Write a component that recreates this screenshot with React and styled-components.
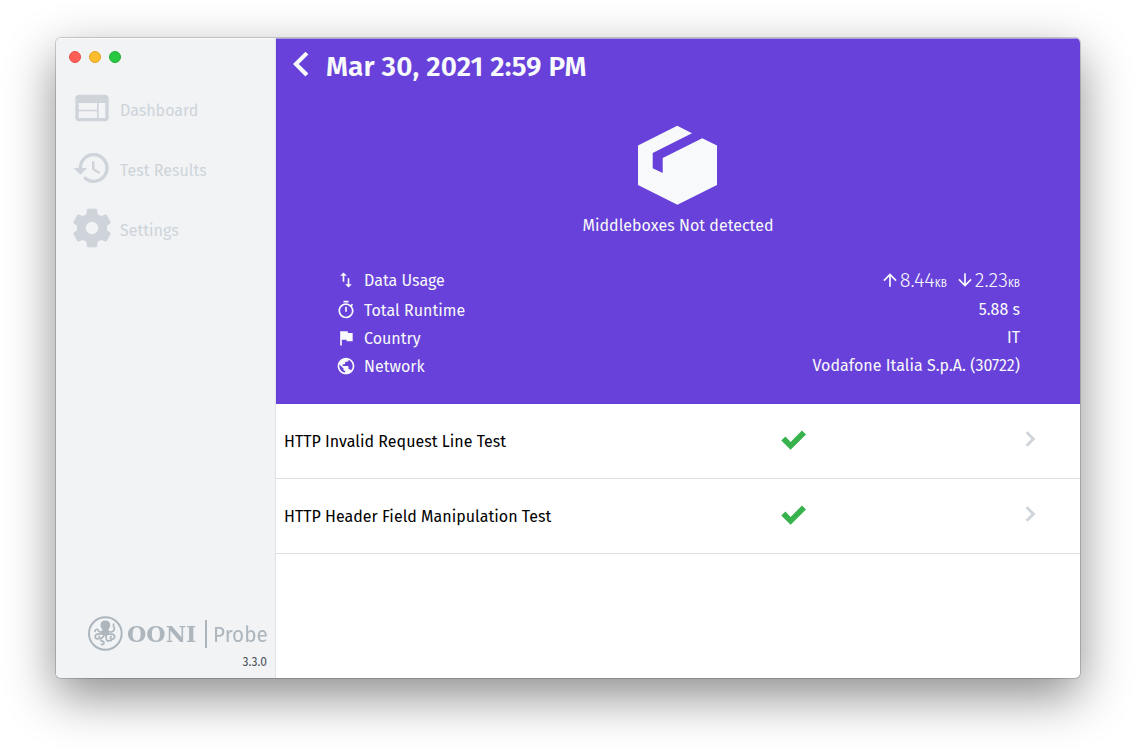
import React from 'react';
import styled, { createGlobalStyle } from 'styled-components';
import {
  MdWeb,
  MdHistory,
  MdSwapVert,
  MdOutlineTimer,
  MdFlag,
  MdPublic,
  MdArrowUpward,
  MdArrowDownward,
} from 'react-icons/md';

const colors = {
  purple: '#6741d9',
  light: '#f8f9fa',
  sidebar: '#f1f3f5',
  muted: '#ced4da',
  logo: '#adb5bd',
  border: '#dee2e6',
  green: '#37b24d',
};

const GlobalStyle = createGlobalStyle`
  *, *::before, *::after { box-sizing: border-box; }
  body {
    margin: 0;
    background: #fff;
    font-family: "Fira Sans", "Noto Sans", sans-serif;
    font-size: 16px;
    line-height: 19px;
    letter-spacing: 0.02px;
  }
  svg { display: block; flex: none; }
`;

const Desktop = styled.div`
  height: 752px;
  padding: 38px 56px 74px;
  overflow: hidden;
`;

const Window = styled.div`
  display: flex;
  height: 640px;
  border-radius: 5px;
  overflow: hidden;
  background: #fff;
  box-shadow: 0 0 0 1px rgba(0, 0, 0, 0.17), 0 18px 50px rgba(0, 0, 0, 0.46);
`;

const Sidebar = styled.aside`
  display: flex;
  flex-direction: column;
  width: 220px;
  background: ${colors.sidebar};
  border-right: 1px solid ${colors.border};
  border-top: 1px solid #f9fafa;
`;

const TrafficLights = styled.div`
  display: flex;
  gap: 8px;
  height: 39px;
  padding: 12px 13px;
`;

const Light = styled.span`
  width: 12px;
  height: 12px;
  border-radius: 50%;
  background: ${(p) => p.$fill};
  border: 1px solid ${(p) => p.$edge};
`;

const Nav = styled.nav`
  display: flex;
  flex-direction: column;
`;

const NavItem = styled.a`
  display: flex;
  align-items: center;
  height: 60px;
  padding-left: 16px;
  color: ${colors.muted};
`;

const NavIcon = styled.span`
  display: flex;
  justify-content: center;
  width: 40px;
  margin-right: 8px;
`;

const NavLabel = styled.span`
  padding-top: 5px;
`;

const Footer = styled.footer`
  display: flex;
  flex-direction: column;
  align-items: flex-end;
  margin-top: auto;
  padding: 0 8px 6px 0;
`;

const Logo = styled.div`
  display: flex;
  align-items: center;
  width: 180px;
  height: 36px;
  color: ${colors.logo};
`;

const Wordmark = styled.span`
  width: 70px;
  margin: 2px 0 0 4px;
  font: bold 23px/28px "DejaVu Serif", serif;
  white-space: nowrap;
  transform: scaleX(0.965);
  transform-origin: left;
`;

const Divider = styled.span`
  flex: none;
  width: 2px;
  height: 28px;
  margin: 2px 6px 0 8px;
  background: ${colors.logo};
`;

const Product = styled.span`
  width: 54px;
  margin-top: 3px;
  font-size: 22.5px;
  line-height: 28px;
  transform: scaleX(0.92);
  transform-origin: left;
`;

const Version = styled.span`
  margin-top: 1px;
  font-size: 12px;
  line-height: 20px;
  color: #495057;
`;

const Main = styled.main`
  flex: 1;
  display: flex;
  flex-direction: column;
`;

const Header = styled.header`
  height: 366px;
  border-top: 1px solid #a99ddb;
  background: ${colors.purple};
  color: ${colors.light};
`;

const TitleBar = styled.div`
  display: flex;
  align-items: center;
  height: 54px;
  padding-left: 16px;
`;

const BackIcon = styled.svg`
  width: 17px;
  height: 26px;
  margin: 0 17px 4px 0;
`;

const Title = styled.h1`
  margin: 0;
  padding-top: 1px;
  font-size: 28px;
  font-weight: 600;
  line-height: 35px;
  letter-spacing: 0.1px;
  white-space: nowrap;
`;

const Hero = styled.div`
  display: flex;
  flex-direction: column;
  align-items: center;
  padding-top: 32px;
`;

const HeroLabel = styled.div`
  margin: 11px 0 29px;
`;

const Stats = styled.div`
  padding: 0 60px;
`;

const Stat = styled.div`
  display: flex;
  align-items: center;
  height: ${(p) => p.$height || 28}px;
`;

const StatLabel = styled.span`
  margin-left: 8px;
  padding-top: 1px;
`;

const StatValue = styled.span`
  margin-left: auto;
  padding-bottom: 1px;
`;

const UsageGroup = styled.span`
  display: flex;
  gap: 8px;
  margin-left: auto;
`;

const Usage = styled.span`
  display: flex;
  align-items: center;
`;

const Amount = styled.span`
  padding-top: 5px;
  font-size: 20px;
  font-weight: 300;
  line-height: 23px;
  letter-spacing: 0.05px;
`;

const Unit = styled.small`
  font-size: 10px;
  font-weight: 400;
`;

const Row = styled.div`
  display: flex;
  align-items: center;
  height: 75px;
  padding: 0 44px 0 8px;
  border-bottom: 1px solid ${colors.border};
  color: #000;
`;

const RowName = styled.span`
  flex: 1;
  padding-top: 1px;
`;

const RowStatus = styled.span`
  width: 244px;
  margin-bottom: 2px;
`;

const RowArrow = styled.svg`
  width: 11px;
  height: 18px;
  margin-bottom: 4px;
`;

function GearIcon() {
  return (
    <svg width="40" height="40" viewBox="-20 -20 40 40" fill="currentColor">
      <mask id="gear-hole">
        <rect x="-20" y="-20" width="40" height="40" fill="#fff" />
        <circle r="6.2" fill="#000" />
      </mask>
      <g mask="url(#gear-hole)">
        <circle r="14.6" />
        {[0, 60, 120, 180, 240, 300].map((angle) => (
          <path
            key={angle}
            transform={`rotate(${angle})`}
            d="M-4-19.2H4Q5-19.2 5.1-18.2L5.500-14.600L9-11H-9L-5.500-14.600L-5.100-18.200Q-5-19.200-4-19.200Z"
          />
        ))}
      </g>
    </svg>
  );
}

function OctopusIcon() {
  return (
    <svg width="36" height="36" viewBox="33 29.500 108 108" fill="none" stroke="currentColor" strokeLinecap="round">
      <circle cx="88" cy="85" r="49" strokeWidth="6" />
      <path
        d="M88 46C79 46 73.500 52 73.500 60C73.500 66 78 69 79 73C79.500 78 75 82 77 87C79 92 96 93 99 88C101 83 97 78 97.500 73C98 69 102.500 66 102.500 60C102.500 52 97 46 88 46Z"
        fill="currentColor"
        stroke="none"
      />
      <g strokeWidth="5">
        <path d="M79 79C74 83 69 80 67 76C65 71 56 72 57 79" />
        <path d="M79 85C73 89 69 86 64 87C56 88 55 99 63 101C69 102 72 97 69 94" />
        <path d="M85 89C83 98 72 97 74 104C76 109 85 107 84 114C83 119 79 119 76 117" />
        <path d="M91 89C91 96 88 101 93 106C98 110 101 104 106 106" />
        <path d="M97 86C101 90 106 84 112 88C120 93 115 104 106 102C102 100 102 95 106 94" />
        <path d="M97 79C104 82 113 80 115 73C117 66 109 63 113 57" />
      </g>
    </svg>
  );
}

function BoxIcon() {
  return (
    <svg width="80" height="80" viewBox="0.5 0 80 80" fill="currentColor">
      <path d="M39.700.7L54.500 8.300L15.200 28V43.200L25.200 48V33L64.700 13.200L79.500 20.500V60L39.900 79.700L.5 60V20.500Z" />
    </svg>
  );
}

function CheckIcon() {
  return (
    <svg width="26" height="20" viewBox="0 0 26 20" fill={colors.green}>
      <path d="M.3 10.600L4.400 6.600L9.600 11.900L21 .5L25 4.400L9.600 19.800Z" />
    </svg>
  );
}

function TestRow({ name }) {
  return (
    <Row>
      <RowName>{name}</RowName>
      <RowStatus>
        <CheckIcon />
      </RowStatus>
      <RowArrow viewBox="0 0 11 18" fill={colors.muted}>
        <path d="M.6 3.100L2.600 1.200L10.400 8.900L2.600 16.700L.6 14.700L6.300 8.900Z" />
      </RowArrow>
    </Row>
  );
}

function DataAmount({ icon: Icon, amount }) {
  return (
    <Usage>
      <Icon size={20} />
      <Amount>
        {amount}
        <Unit>KB</Unit>
      </Amount>
    </Usage>
  );
}

export default function App() {
  return (
    <Desktop>
      <GlobalStyle />
      <Window>
        <Sidebar>
          <TrafficLights>
            <Light $fill="#ff5f57" $edge="#e9504a" />
            <Light $fill="#ffbd2e" $edge="#e3a325" />
            <Light $fill="#28c940" $edge="#1fae34" />
          </TrafficLights>
          <Nav>
            <NavItem>
              <NavIcon><MdWeb size={40} /></NavIcon>
              <NavLabel>Dashboard</NavLabel>
            </NavItem>
            <NavItem>
              <NavIcon><MdHistory size={40} /></NavIcon>
              <NavLabel>Test Results</NavLabel>
            </NavItem>
            <NavItem>
              <NavIcon><GearIcon /></NavIcon>
              <NavLabel>Settings</NavLabel>
            </NavItem>
          </Nav>
          <Footer>
            <Logo>
              <OctopusIcon />
              <Wordmark>OONI</Wordmark>
              <Divider />
              <Product>Probe</Product>
            </Logo>
            <Version>3.3.0</Version>
          </Footer>
        </Sidebar>
        <Main>
          <Header>
            <TitleBar>
              <BackIcon viewBox="0 0 17 26" fill="currentColor">
                <path d="M13.400.7L16.400 3.600L6.800 13.100L16.400 22.500L13.400 25.400L1 13.100Z" />
              </BackIcon>
              <Title>Mar 30, 2021 2:59 PM</Title>
            </TitleBar>
            <Hero>
              <BoxIcon />
              <HeroLabel>Middleboxes Not detected</HeroLabel>
            </Hero>
            <Stats>
              <Stat $height={32}>
                <MdSwapVert size={20} />
                <StatLabel>Data Usage</StatLabel>
                <UsageGroup>
                  <DataAmount icon={MdArrowUpward} amount="8.44" />
                  <DataAmount icon={MdArrowDownward} amount="2.23" />
                </UsageGroup>
              </Stat>
              <Stat>
                <MdOutlineTimer size={20} />
                <StatLabel>Total Runtime</StatLabel>
                <StatValue>5.88 s</StatValue>
              </Stat>
              <Stat>
                <MdFlag size={20} />
                <StatLabel>Country</StatLabel>
                <StatValue>IT</StatValue>
              </Stat>
              <Stat>
                <MdPublic size={20} />
                <StatLabel>Network</StatLabel>
                <StatValue>Vodafone Italia S.p.A. (30722)</StatValue>
              </Stat>
            </Stats>
          </Header>
          <TestRow name="HTTP Invalid Request Line Test" />
          <TestRow name="HTTP Header Field Manipulation Test" />
        </Main>
      </Window>
    </Desktop>
  );
}
